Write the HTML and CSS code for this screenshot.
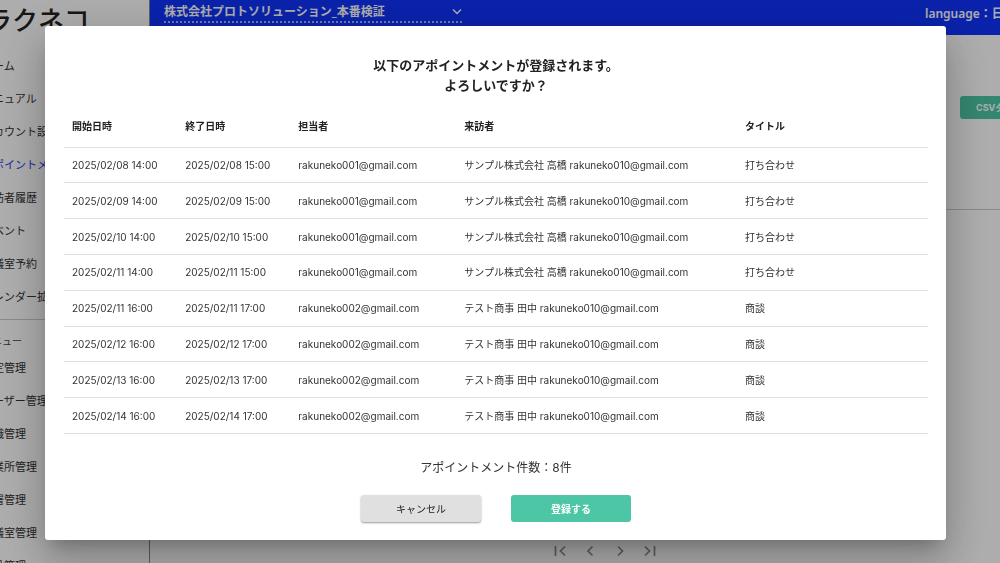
FILE: index.html
```html
<!DOCTYPE html>
<html lang="ja">
<head>
<meta charset="utf-8">
<meta name="viewport" content="width=device-width, initial-scale=1">
<title>ラクネコ</title>
<link rel="stylesheet" href="styles.css">
</head>
<body>
<div class="app">
  <aside class="sidebar">
    <div class="logo">ラクネコ</div>
    <nav class="nav">
      <a href="#">ホーム</a>
      <a href="#">マニュアル</a>
      <a href="#">アカウント設定</a>
      <a href="#" class="active">アポイントメント</a>
      <a href="#">来訪者履歴</a>
      <a href="#">イベント</a>
      <a href="#">会議室予約</a>
      <a href="#">カレンダー拡張</a>
    </nav>
    <div class="nav-heading">メニュー</div>
    <nav class="nav">
      <a href="#">設定管理</a>
      <a href="#">ユーザー管理</a>
      <a href="#">組織管理</a>
      <a href="#">事業所管理</a>
      <a href="#">部署管理</a>
      <a href="#">会議室管理</a>
      <a href="#">備品管理</a>
    </nav>
  </aside>
  <div class="main">
    <header class="topbar">
      <button class="company" type="button">
        <span>株式会社プロトソリューション_本番検証</span>
        <svg width="10" height="8" viewBox="0 0 10 8"><path d="M1 2.500 5 6.500 9 2.500"/></svg>
      </button>
      <span class="language">language：日本語</span>
    </header>
    <div class="toolbar">
      <button class="csv" type="button">CSVダウンロード</button>
    </div>
    <div class="pager">
      <button type="button" aria-label="最初"><svg width="14" height="14" viewBox="0 0 14 14"><path d="M2.500 2v10M12 2.500 7.500 7l4.500 4.500"/></svg></button>
      <button type="button" aria-label="前へ"><svg width="14" height="14" viewBox="0 0 14 14"><path d="M9.500 2.500 5 7l4.500 4.500"/></svg></button>
      <button type="button" aria-label="次へ"><svg width="14" height="14" viewBox="0 0 14 14"><path d="M5 2.500 9.500 7 5 11.500"/></svg></button>
      <button type="button" aria-label="最後"><svg width="14" height="14" viewBox="0 0 14 14"><path d="M11.500 2v10M2 2.500 6.500 7 2 11.500"/></svg></button>
    </div>
  </div>
</div>

<div class="backdrop">
  <section class="dialog" role="dialog" aria-modal="true" aria-labelledby="dialog-title">
    <h2 id="dialog-title" class="title">以下のアポイントメントが登録されます。<br>よろしいですか？</h2>
    <table class="list">
      <colgroup><col class="c-date"><col class="c-date"><col class="c-staff"><col class="c-visitor"><col></colgroup>
      <thead>
        <tr><th>開始日時</th><th>終了日時</th><th>担当者</th><th>来訪者</th><th>タイトル</th></tr>
      </thead>
      <tbody>
        <tr><td>2025/02/08 14:00</td><td>2025/02/08 15:00</td><td>rakuneko001@gmail.com</td><td>サンプル株式会社 高橋 rakuneko010@gmail.com</td><td>打ち合わせ</td></tr>
        <tr><td>2025/02/09 14:00</td><td>2025/02/09 15:00</td><td>rakuneko001@gmail.com</td><td>サンプル株式会社 高橋 rakuneko010@gmail.com</td><td>打ち合わせ</td></tr>
        <tr><td>2025/02/10 14:00</td><td>2025/02/10 15:00</td><td>rakuneko001@gmail.com</td><td>サンプル株式会社 高橋 rakuneko010@gmail.com</td><td>打ち合わせ</td></tr>
        <tr><td>2025/02/11 14:00</td><td>2025/02/11 15:00</td><td>rakuneko001@gmail.com</td><td>サンプル株式会社 高橋 rakuneko010@gmail.com</td><td>打ち合わせ</td></tr>
        <tr><td>2025/02/11 16:00</td><td>2025/02/11 17:00</td><td>rakuneko002@gmail.com</td><td>テスト商事 田中 rakuneko010@gmail.com</td><td>商談</td></tr>
        <tr><td>2025/02/12 16:00</td><td>2025/02/12 17:00</td><td>rakuneko002@gmail.com</td><td>テスト商事 田中 rakuneko010@gmail.com</td><td>商談</td></tr>
        <tr><td>2025/02/13 16:00</td><td>2025/02/13 17:00</td><td>rakuneko002@gmail.com</td><td>テスト商事 田中 rakuneko010@gmail.com</td><td>商談</td></tr>
        <tr><td>2025/02/14 16:00</td><td>2025/02/14 17:00</td><td>rakuneko002@gmail.com</td><td>テスト商事 田中 rakuneko010@gmail.com</td><td>商談</td></tr>
      </tbody>
    </table>
    <p class="count">アポイントメント件数：8件</p>
    <div class="actions">
      <button class="btn cancel" type="button">キャンセル</button>
      <button class="btn submit" type="button">登録する</button>
    </div>
  </section>
</div>
</body>
</html>
```
FILE: styles.css
```css
* {
  box-sizing: border-box;
}

body {
  margin: 0;
  overflow: hidden;
  background: #fff;
  color: #222;
  font-family: Inter, "Noto Sans CJK JP", sans-serif;
  font-size: 10px;
}

button {
  border: 0;
  padding: 0;
  font-family: inherit;
  cursor: pointer;
}

svg {
  fill: none;
  stroke: currentColor;
}

.app {
  display: flex;
  height: 100vh;
  overflow: hidden;
}

.sidebar {
  flex: 0 0 168px;
  margin-left: -18px;
  border-right: 1px solid #888;
  white-space: nowrap;
}

.logo {
  height: 50px;
  padding-left: 4px;
  font-size: 26px;
  font-weight: 500;
  line-height: 42px;
}

.nav a {
  display: block;
  color: #333;
  font-size: 11px;
  line-height: 33px;
  text-decoration: none;
}

.nav .active {
  color: #2a3cf0;
}

.nav-heading {
  margin-top: 5px;
  padding-top: 10px;
  border-top: 1px solid #ccc;
  color: #444;
  font-size: 10px;
  line-height: 22px;
}

.main {
  display: flex;
  flex: 1;
  flex-direction: column;
  min-width: 0;
}

.topbar {
  display: flex;
  justify-content: space-between;
  height: 35px;
  padding-left: 14px;
  background: #0f33fd;
  color: #fff;
  font-family: "Noto Sans", "Noto Sans CJK JP", sans-serif;
  font-size: 12px;
}

.company {
  display: flex;
  align-items: center;
  justify-content: space-between;
  width: 298px;
  height: 23px;
  border-bottom: 2px dotted #aab2ff;
  background: none;
  color: inherit;
  font-size: 12px;
  font-weight: 700;
}

.company svg {
  stroke-width: 1.5;
}

.language {
  width: 75px;
  overflow: hidden;
  font-weight: 600;
  line-height: 27px;
  white-space: nowrap;
}

.toolbar {
  display: flex;
  justify-content: flex-end;
  height: 175px;
  padding-top: 61px;
  border-bottom: 1px solid #ccc;
  overflow: hidden;
}

.csv {
  width: 40px;
  height: 23px;
  padding-left: 16px;
  border-radius: 3px 0 0 3px;
  background: #4cc6a5;
  color: #fff;
  font-size: 9px;
  font-weight: 700;
  text-align: left;
  white-space: nowrap;
  overflow: hidden;
}

.pager {
  display: flex;
  justify-content: center;
  gap: 16px;
  margin-top: auto;
  padding: 0 0 5px 60px;
}

.pager button {
  width: 14px;
  height: 14px;
  background: none;
  color: #8c8c8c;
}

.pager svg {
  display: block;
  stroke-width: 1.7;
}

.backdrop {
  position: fixed;
  inset: 0;
  padding: 26px 54px 23px 45px;
  background: rgba(0, 0, 0, 0.32);
}

.dialog {
  padding: 29px 18px 18px 19px;
  border-radius: 3px;
  background: #fff;
  box-shadow: 0 11px 15px -7px rgba(0, 0, 0, 0.2), 0 24px 38px 3px rgba(0, 0, 0, 0.14), 0 9px 46px 8px rgba(0, 0, 0, 0.12);
}

.title {
  margin: 0 0 11px;
  font-size: 13px;
  font-weight: 700;
  line-height: 20px;
  text-align: center;
}

.list {
  width: 100%;
  height: 328px;
  border-collapse: collapse;
  table-layout: fixed;
}

.c-date {
  width: 13.1%;
}

.c-staff {
  width: 19.2%;
}

.c-visitor {
  width: 32.5%;
}

.list th,
.list td {
  padding: 0 8px;
  border-bottom: 1px solid #e0e0e0;
  line-height: 16px;
  text-align: left;
  white-space: nowrap;
}

.list td {
  height: 35px;
  color: #333;
}

.list th {
  height: 41px;
  font-weight: 700;
}

.count {
  margin: 24px 0 17px;
  color: #333;
  font-size: 12px;
  line-height: 20px;
  text-align: center;
}

.actions {
  display: flex;
  justify-content: center;
  gap: 30px;
}

.btn {
  width: 120px;
  height: 27px;
  border-radius: 3px;
  font-size: 10px;
  line-height: 16px;
}

.cancel {
  background: #e0e0e0;
  box-shadow: 0 1px 2px rgba(0, 0, 0, 0.4);
  color: #222;
}

.submit {
  background: #4cc6a5;
  color: #fff;
  font-weight: 700;
}
```
